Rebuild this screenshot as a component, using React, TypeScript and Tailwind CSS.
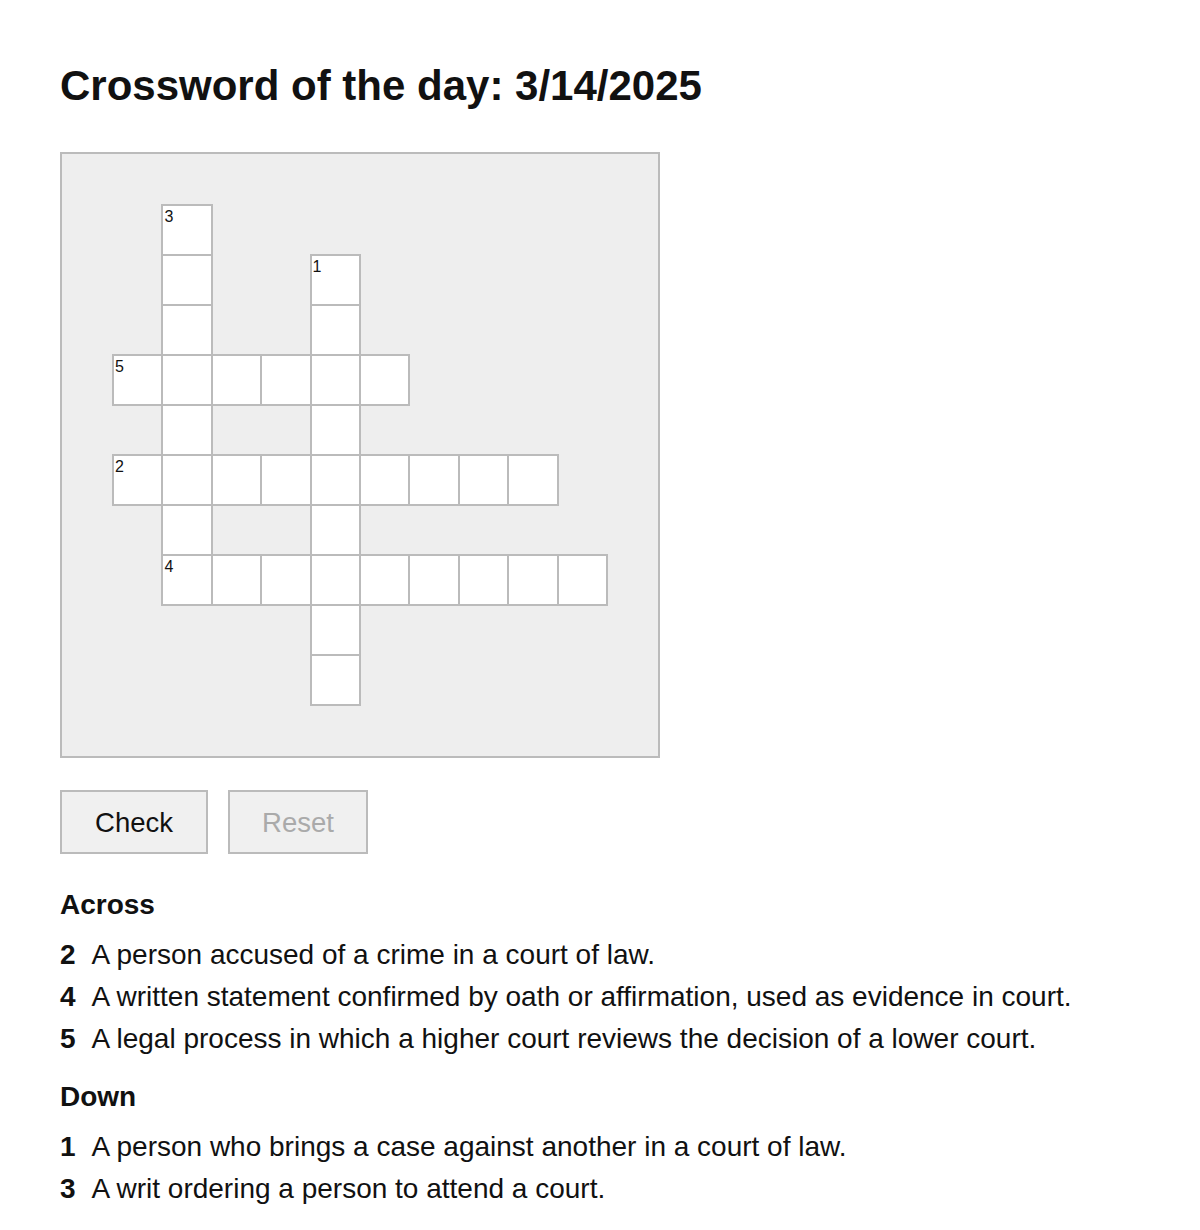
import React, { useState } from 'react';

// 10x10 layout, '.' = blank square, letters = answer cells
const LAYOUT = [
  '.S........',
  '.U..P.....',
  '.B..L.....',
  'APPEAL....',
  '.O..I.....',
  'DEFENDANT.',
  '.N..T.....',
  '.AFFIDAVIT',
  '....F.....',
  '....F.....',
];

const NUMBERS: Record<string, number> = {
  '0,1': 3,
  '1,4': 1,
  '3,0': 5,
  '5,0': 2,
  '7,1': 4,
};

const ACROSS = [
  { n: 2, clue: 'A person accused of a crime in a court of law.' },
  { n: 4, clue: 'A written statement confirmed by oath or affirmation, used as evidence in court.' },
  { n: 5, clue: 'A legal process in which a higher court reviews the decision of a lower court.' },
];

const DOWN = [
  { n: 1, clue: 'A person who brings a case against another in a court of law.' },
  { n: 3, clue: 'A writ ordering a person to attend a court.' },
];

function ClueList({ title, clues }: { title: string; clues: { n: number; clue: string }[] }) {
  return (
    <div>
      <h2 className="text-[28px] font-bold leading-[36px] mb-[11px]">{title}</h2>
      <ul>
        {clues.map((c) => (
          <li key={c.n} className="text-[28px] leading-[42px] flex">
            <span className="font-bold mr-[16px]">{c.n}</span>
            <span>{c.clue}</span>
          </li>
        ))}
      </ul>
    </div>
  );
}

export default function App() {
  const [answers, setAnswers] = useState<Record<string, string>>({});
  const filled = Object.values(answers).some((v) => v !== '');

  return (
    <div className="min-h-screen bg-white text-[#111] px-[60px] pt-[62px] pb-[20px]" style={{ fontFamily: '"Liberation Sans", Arial, sans-serif' }}>
      <h1 className="text-[42px] font-bold leading-[48px]">Crossword of the day: 3/14/2025</h1>

      {/* Board */}
      <div className="mt-[42px] w-[600px] border-2 border-[#bbb] bg-[#eee] pt-[50px] pl-[50px] pr-[52px] pb-[52px]">
        <div className="grid grid-cols-10 grid-rows-[repeat(10,50px)]">
          {LAYOUT.flatMap((row, r) =>
            row.split('').map((ch, c) => {
              const key = `${r},${c}`;
              if (ch === '.') return <div key={key} />;
              const num = NUMBERS[key];
              return (
                <div key={key} className="relative w-[calc(100%+2px)] h-[52px] border-2 border-[#bbb] bg-white">
                  {num && (
                    <span className="absolute top-[2px] left-[1px] text-[16px] leading-[17px] text-[#111]">{num}</span>
                  )}
                  <input
                    maxLength={1}
                    value={answers[key] || ''}
                    onChange={(e) => setAnswers({ ...answers, [key]: e.target.value.toUpperCase() })}
                    className="w-full h-full bg-transparent text-center text-[24px] uppercase outline-none"
                  />
                </div>
              );
            })
          )}
        </div>
      </div>

      {/* Buttons */}
      <div className="mt-[32px] flex gap-[20px]">
        <button className="h-[64px] w-[148px] border-2 border-[#bbb] bg-[#f0f0f0] text-[27.5px] leading-[34px] pt-[2px] text-[#111]">Check</button>
        <button
          disabled={!filled}
          onClick={() => setAnswers({})}
          className="h-[64px] w-[140px] border-2 border-[#bbb] bg-[#f0f0f0] text-[27.5px] leading-[34px] pt-[2px] text-[#aaa] enabled:text-[#111]"
        >
          Reset
        </button>
      </div>

      <div className="mt-[33px]">
        <ClueList title="Across" clues={ACROSS} />
      </div>
      <div className="mt-[19px]">
        <ClueList title="Down" clues={DOWN} />
      </div>
    </div>
  );
}
